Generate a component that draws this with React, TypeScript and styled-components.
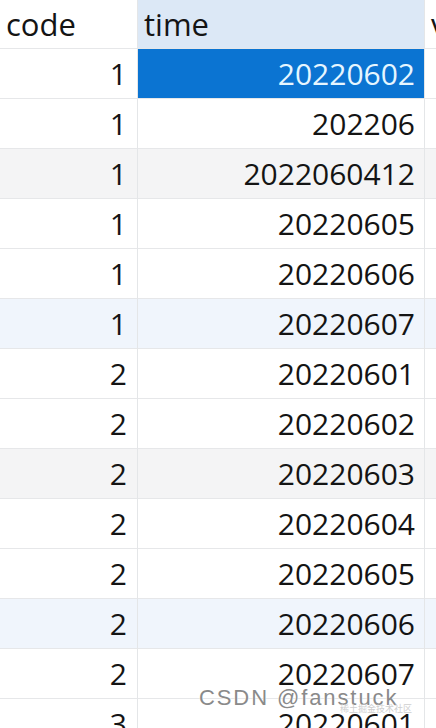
import React from 'react'
import styled, { createGlobalStyle, css } from 'styled-components'

type Tint = 'none' | 'gray' | 'blue'

interface Row {
  code: number
  time: string
  tint: Tint
  selected?: boolean
}

const rows: Row[] = [
  { code: 1, time: '20220602', tint: 'none', selected: true },
  { code: 1, time: '202206', tint: 'none' },
  { code: 1, time: '2022060412', tint: 'gray' },
  { code: 1, time: '20220605', tint: 'none' },
  { code: 1, time: '20220606', tint: 'none' },
  { code: 1, time: '20220607', tint: 'blue' },
  { code: 2, time: '20220601', tint: 'none' },
  { code: 2, time: '20220602', tint: 'none' },
  { code: 2, time: '20220603', tint: 'gray' },
  { code: 2, time: '20220604', tint: 'none' },
  { code: 2, time: '20220605', tint: 'none' },
  { code: 2, time: '20220606', tint: 'blue' },
  { code: 2, time: '20220607', tint: 'none' },
  { code: 3, time: '20220601', tint: 'none' }
]

const tints: Record<Tint, string> = {
  none: '#ffffff',
  gray: '#f4f4f5',
  blue: '#f0f5fc'
}

const GlobalStyle = createGlobalStyle`
  html, body {
    margin: 0;
    padding: 0;
    background: #ffffff;
    overflow: hidden;
  }
  body {
    font-family: "Open Sans", "Noto Sans", sans-serif;
  }
`

const Sheet = styled.div`
  position: relative;
  width: 436px;
  height: 728px;
  overflow: hidden;
`

const Grid = styled.div`
  display: grid;
  grid-template-columns: 138px 287px 1fr;
  grid-auto-rows: 50px;
  grid-template-rows: 49px;
`

const Cell = styled.div<{ $tint?: Tint; $head?: boolean; $active?: boolean; $selected?: boolean }>`
  display: flex;
  align-items: center;
  justify-content: flex-end;
  padding: 0 9px 0 6px;
  border-right: 1px solid #e4e6e8;
  border-bottom: 1px solid #e6e7e9;
  background: ${p => tints[p.$tint || 'none']};
  color: #141414;
  font-size: 30px;
  line-height: 1;
  white-space: nowrap;
  overflow: hidden;
  ${p =>
    p.$head &&
    css`
      justify-content: flex-start;
      padding: 0 6px;
      font-size: 31px;
      background: ${p.$active ? '#dce8f6' : '#ffffff'};
    `}
  ${p =>
    p.$selected &&
    css`
      background: #0b74d2;
      color: #e6f6ff;
    `}
`

const CodeCell = styled(Cell)`
  padding-right: 10px;
`

const Watermark = styled.div`
  position: absolute;
  left: 199px;
  top: 685px;
  color: #8a8a8a;
  font-family: "Liberation Sans", Arial, sans-serif;
  font-size: 22px;
  line-height: 26px;
  letter-spacing: 1.9px;
  text-shadow: 0 0 2px #ffffff, 0 0 1px #ffffff;
`

const WatermarkSub = styled.div`
  position: absolute;
  left: 340px;
  top: 704px;
  color: #cfcfcf;
  font-family: "Noto Sans CJK SC", sans-serif;
  font-size: 9px;
  line-height: 10px;
`

export default function App() {
  return (
    <Sheet>
      <GlobalStyle />
      <Grid>
        <Cell $head>code</Cell>
        <Cell $head $active>time</Cell>
        <Cell $head>v</Cell>
        {rows.map((r, i) => (
          <React.Fragment key={i}>
            <CodeCell $tint={r.tint}>{r.code}</CodeCell>
            <Cell $tint={r.tint} $selected={r.selected}>{r.time}</Cell>
            <Cell $tint={r.tint} />
          </React.Fragment>
        ))}
      </Grid>
      <Watermark>CSDN @fanstuck</Watermark>
      <WatermarkSub>稀土掘金技术社区</WatermarkSub>
    </Sheet>
  )
}
